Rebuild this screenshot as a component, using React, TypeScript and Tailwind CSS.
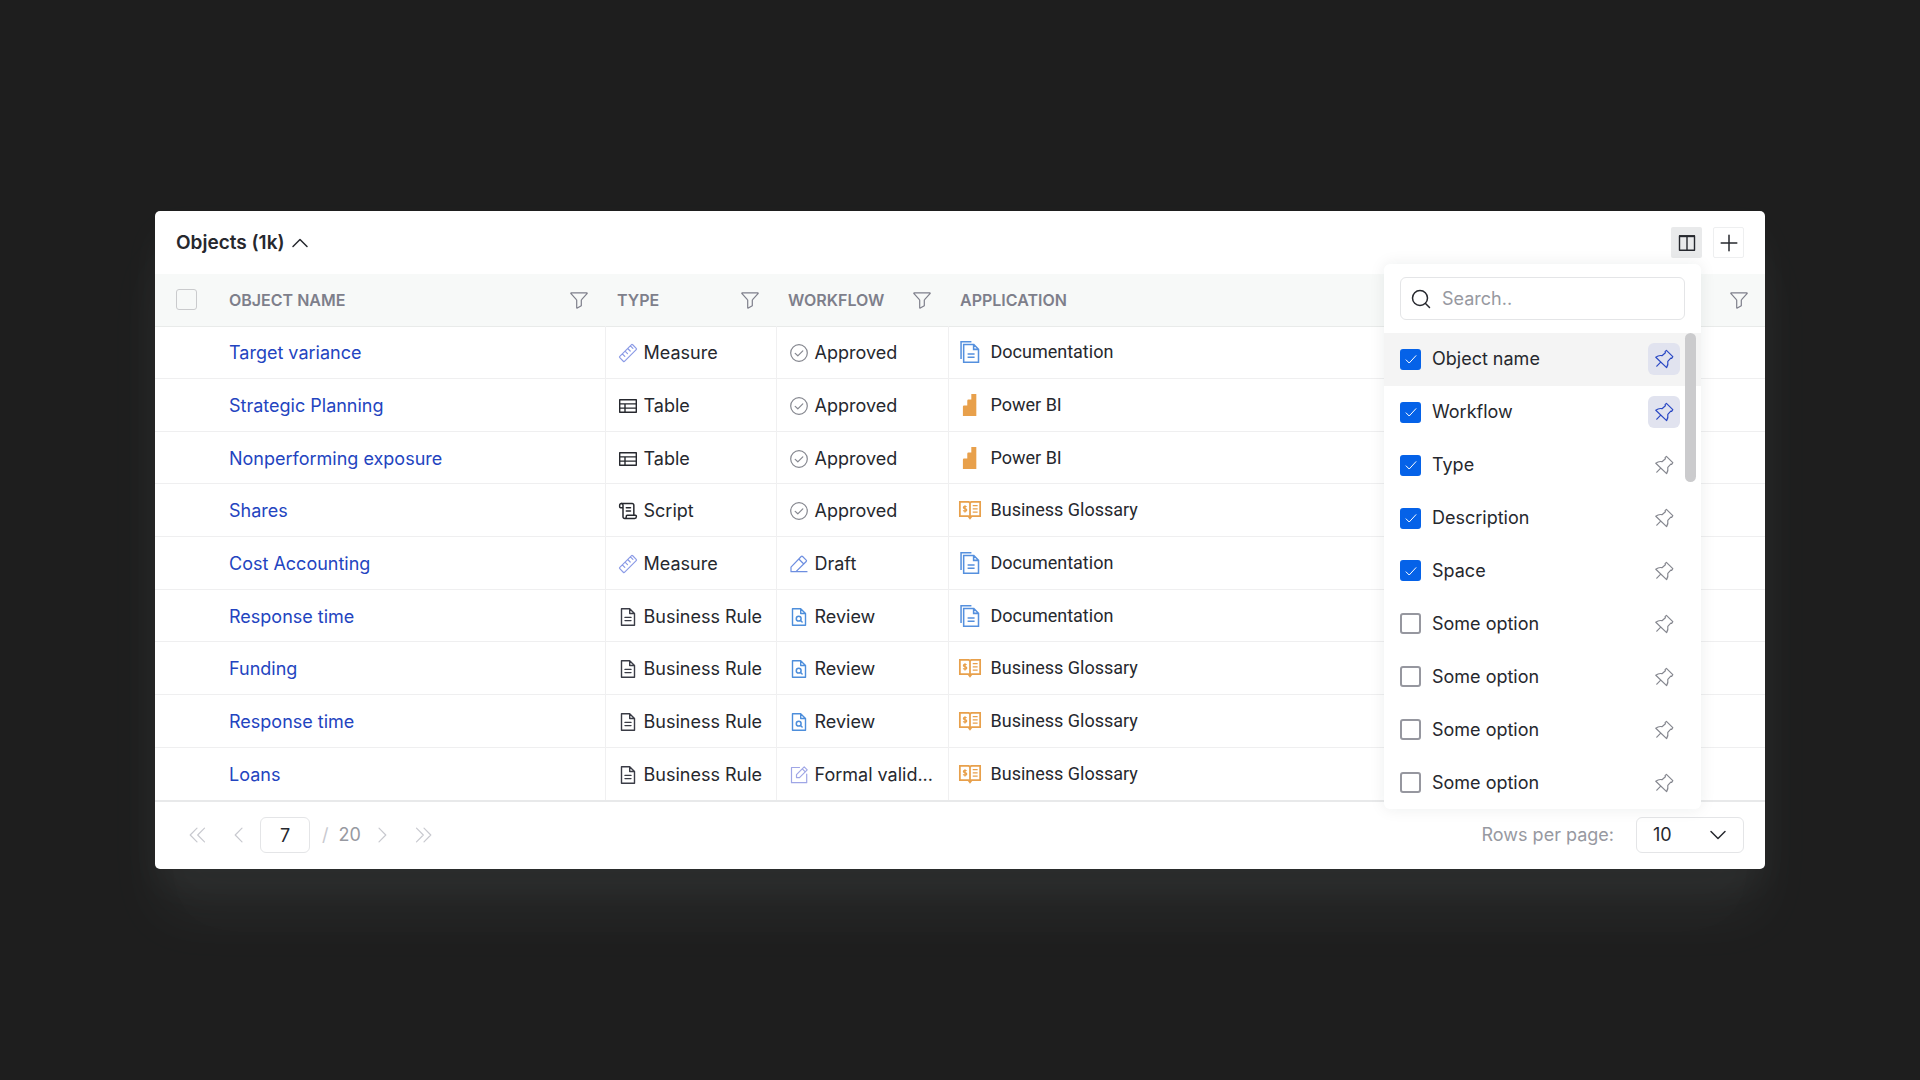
import { useState, type ReactNode } from 'react';
import { ScrollText } from 'lucide-react';

interface IconProps {
  className?: string;
  children?: ReactNode;
}

function Icon({ className = '', children }: IconProps) {
  return (
    <svg
      viewBox="0 0 20 20"
      fill="none"
      stroke="currentColor"
      strokeWidth="1.2"
      strokeLinejoin="round"
      strokeLinecap="round"
      aria-hidden="true"
      className={`size-5 shrink-0 ${className}`}
    >
      {children}
    </svg>
  );
}

const FilterIcon = () => (
  <Icon>
    <path d="M2.4 2.8h15.2a.5.5 0 0 1 .4.9l-5.4 5.9a1 1 0 0 0-.3.7v5.5l-4 2.3a.4.4 0 0 1-.6-.3v-7.5a1 1 0 0 0-.3-.7L2 3.7a.5.5 0 0 1 .4-.9z" />
  </Icon>
);

const PinIcon = () => (
  <Icon>
    <path d="M12.4 1.4 18.8 7.6l-1 1.7-1-.2-3 3.3c.4 2.3.1 4.1-1.2 6.2L1.8 8.2c2-1.5 4-2 6.2-1.5l3.4-2.9-.3-1.2z M6.7 13.2 2.8 17.2" />
  </Icon>
);

const typeIcons: Record<string, ReactNode> = {
  Measure: (
    <Icon className="text-[#8b9be6]">
      <path d="M1.8 13.3 13.3 1.8a1 1 0 0 1 1.4 0l3.5 3.5a1 1 0 0 1 0 1.4L6.7 18.2a1 1 0 0 1-1.4 0l-3.5-3.5a1 1 0 0 1 0-1.4z M4.3 10.9l2.5 2.5 M7 8.2l2.5 2.5 M9.7 5.5l2.5 2.5 M12.4 2.9l2.5 2.5" />
    </Icon>
  ),
  Table: (
    <Icon className="text-[#26282e]">
      <path strokeWidth="1.4" d="M1.7 3.7h16.6v12.6H1.7z M1.7 7.9h16.6 M1.7 12.1h16.6 M7 7.9v8.4" />
    </Icon>
  ),
  Script: <ScrollText className="size-5 shrink-0 text-[#26282e]" strokeWidth={1.8} aria-hidden="true" />,
  'Business Rule': (
    <Icon className="text-[#3a3c46]">
      <path strokeWidth="1.4" d="M3.5 1.7h8.2l4.8 4.8v11.8h-13z M11.7 1.7v4.8h4.8 M7 10.4h6 M7 13.6h6" />
    </Icon>
  ),
};

const workflowIcons: Record<string, ReactNode> = {
  Approved: (
    <Icon className="text-[#85878f]">
      <circle cx="10" cy="10" r="8.3" />
      <path d="M6.2 10.4 8.8 12.8 13.8 7.8" />
    </Icon>
  ),
  Draft: (
    <Icon className="text-[#6d8ee0]">
      <path d="M2 17.7v-4.6L12.2 2.5a1 1 0 0 1 1.4 0l3.6 3.6a1 1 0 0 1 0 1.4L7 17.7z M2 17.7h16 M9.8 5l5 5" />
    </Icon>
  ),
  Review: (
    <Icon className="text-[#4d8edb]">
      <path strokeWidth="1.4" d="M3.5 1.7h8.2l4.8 4.8v11.8h-13z M11.7 1.7v4.8h4.8" />
      <circle cx="9.7" cy="11.7" r="2.4" strokeWidth="1.5" />
      <path strokeWidth="1.5" d="m11.5 13.5 1.6 1.5" />
    </Icon>
  ),
  'Formal valid...': (
    <Icon className="text-[#9fa6e6]">
      <path d="M10.5 2.5h-8v15.2h15.2V9 M7.5 12.6v-3L15.2 1.9l3 3-7.7 7.7z M13.3 3.8l3 3" />
    </Icon>
  ),
};

const applicationIcons: Record<string, ReactNode> = {
  Documentation: (
    <svg viewBox="0 0 22 22" fill="none" stroke="currentColor" strokeWidth="1.4" aria-hidden="true" className="size-6 shrink-0 text-[#5590de]">
      <path d="M2.8 17.5V1.7h9.5 M5.2 4.2h9.3l4.3 4.3v11.8H5.2z M14.3 4.2v4.4h4.5 M8.8 12.8h6.4 M8.8 15.8h6.4" />
    </svg>
  ),
  'Power BI': (
    <svg viewBox="0 0 22 22" fill="currentColor" aria-hidden="true" className="size-6 shrink-0 text-[#e8a04b]">
      <path d="M12.2 1h4.6v20H4.500V12.5a1 1 0 0 1 1-1h3V7a1 1 0 0 1 1-1h2.7z" />
    </svg>
  ),
  'Business Glossary': (
    <svg viewBox="0 0 22 22" fill="none" stroke="currentColor" strokeWidth="1.6" aria-hidden="true" className="size-6 shrink-0 text-[#e8a04b]">
      <path d="M11 4.800 10 3.600H1.700v13h7.800l1.500 2 1.500-2h7.800v-13H12z M11 4.800v13.500" />
      <path strokeWidth="1.2" d="M13.500 7h4.500 M13.500 10h4.500 M13.500 13h4.500 M7.800 8.200c-.6-.9-2.800-.8-2.800.4 0 1.500 3 .9 3 2.500 0 1.300-2.500 1.400-3.200.3 M6.400 6.600v6.800" />
    </svg>
  ),
};

const rows = [
  { name: 'Target variance', type: 'Measure', workflow: 'Approved', application: 'Documentation' },
  { name: 'Strategic Planning', type: 'Table', workflow: 'Approved', application: 'Power BI' },
  { name: 'Nonperforming exposure', type: 'Table', workflow: 'Approved', application: 'Power BI' },
  { name: 'Shares', type: 'Script', workflow: 'Approved', application: 'Business Glossary' },
  { name: 'Cost Accounting', type: 'Measure', workflow: 'Draft', application: 'Documentation' },
  { name: 'Response time', type: 'Business Rule', workflow: 'Review', application: 'Documentation' },
  { name: 'Funding', type: 'Business Rule', workflow: 'Review', application: 'Business Glossary' },
  { name: 'Response time', type: 'Business Rule', workflow: 'Review', application: 'Business Glossary' },
  { name: 'Loans', type: 'Business Rule', workflow: 'Formal valid...', application: 'Business Glossary' },
];

const initialColumns = [
  { label: 'Object name', visible: true, pinned: true },
  { label: 'Workflow', visible: true, pinned: true },
  { label: 'Type', visible: true, pinned: false },
  { label: 'Description', visible: true, pinned: false },
  { label: 'Space', visible: true, pinned: false },
  { label: 'Some option', visible: false, pinned: false },
  { label: 'Some option', visible: false, pinned: false },
  { label: 'Some option', visible: false, pinned: false },
  { label: 'Some option', visible: false, pinned: false },
];

function ColumnPicker() {
  const [columns, setColumns] = useState(initialColumns);

  const toggle = (index: number, key: 'visible' | 'pinned') => {
    setColumns(columns.map((c, i) => (i === index ? { ...c, [key]: !c[key] } : c)));
  };

  return (
    <div className="absolute right-px top-full z-10 mt-1.5 w-[317px] rounded-md bg-white shadow-[0_0_16px_rgba(30,40,40,0.08)]">
      <div className="px-4 py-[13px]">
        <label className="flex h-[43px] items-center gap-[11px] rounded-md border border-[#e4e5e7] px-2.5 text-[#26282e]">
          <Icon>
            <circle cx="9" cy="9" r="7.5" strokeWidth="1.5" />
            <path strokeWidth="1.5" d="m14.5 14.5 4 4" />
          </Icon>
          <input
            type="text"
            aria-label="Search"
            placeholder="Search.."
            className="w-full min-w-0 bg-transparent outline-none placeholder:text-[#9799a1]"
          />
        </label>
      </div>
      <div className="relative">
        <ul className="grid h-[476px] auto-rows-fr">
          {columns.map((column, i) => (
            <li key={i} className={`flex items-center justify-between pl-4 pr-[21px] ${i === 0 ? 'bg-[#f4f4f4]' : ''}`}>
              <label className="flex items-center gap-[11px]">
                <span className="grid size-[21px] place-items-center *:col-start-1 *:row-start-1">
                  <input
                    type="checkbox"
                    checked={column.visible}
                    onChange={() => toggle(i, 'visible')}
                    className="size-[21px] appearance-none rounded-[3px] border-2 border-[#96979f] checked:border-[#0562e8] checked:bg-[#0562e8]"
                  />
                  {column.visible && (
                    <svg viewBox="0 0 12 12" fill="none" stroke="white" aria-hidden="true" className="pointer-events-none size-3">
                      <path d="m.8 6.6 3.4 3.4 7-7.6" />
                    </svg>
                  )}
                </span>
                {column.label}
              </label>
              <button
                type="button"
                aria-label={`Pin ${column.label}`}
                onClick={() => toggle(i, 'pinned')}
                className={`grid size-8 place-items-center rounded-md ${column.pinned ? 'bg-[#e1e3ef] text-[#2a48c4]' : 'text-[#85878f]'}`}
              >
                <PinIcon />
              </button>
            </li>
          ))}
        </ul>
        <div className="absolute right-[5px] top-0 h-[149px] w-[11px] rounded-full bg-[#cbcbcd]" />
      </div>
    </div>
  );
}

function HeaderCell({ label }: { label: string }) {
  return (
    <th scope="col" className="pl-3 pr-4 text-left text-base font-semibold text-[#7e7f8b]">
      <div className="flex items-center justify-between">
        {label}
        <button type="button" aria-label={`Filter ${label}`}>
          <FilterIcon />
        </button>
      </div>
    </th>
  );
}

function Pagination() {
  return (
    <footer className="flex h-[67px] items-center justify-between px-[21px] pb-px">
      <div className="flex items-center text-[#c8c9cf]">
        <button type="button" aria-label="First page" className="ml-3">
          <Icon><path d="M9 3.2 2.2 10 9 16.8 M16.5 3.2 9.7 10l6.8 6.8" /></Icon>
        </button>
        <button type="button" aria-label="Previous page" className="ml-5">
          <Icon><path d="M14 3.2 7.2 10l6.8 6.8" /></Icon>
        </button>
        <input
          type="text"
          aria-label="Page"
          defaultValue="7"
          className="ml-3 h-9 w-[50px] rounded-md border border-[#e4e5e7] text-center text-[#26282e]"
        />
        <span className="ml-3">/</span>
        <span className="ml-2.5 text-[#9799a1]">20</span>
        <button type="button" aria-label="Next page" className="ml-3">
          <Icon><path d="m6 3.2 6.8 6.8L6 16.8" /></Icon>
        </button>
        <button type="button" aria-label="Last page" className="ml-5">
          <Icon><path d="m3.5 3.2 6.8 6.8-6.8 6.8 M11 3.2l6.8 6.8-6.8 6.8" /></Icon>
        </button>
      </div>
      <div className="flex items-center gap-[22px]">
        <label htmlFor="rows-per-page" className="text-[#9799a1]">Rows per page:</label>
        <div className="relative">
          <select
            id="rows-per-page"
            defaultValue="10"
            className="h-9 w-[108px] appearance-none rounded-md border border-[#e4e5e7] bg-white px-4 text-[#26282e]"
          >
            <option>10</option>
            <option>20</option>
            <option>50</option>
          </select>
          <span className="pointer-events-none absolute inset-y-0 right-4 flex items-center text-[#26282e]">
            <Icon><path strokeWidth="1.5" d="m3 6.5 7 7 7-7" /></Icon>
          </span>
        </div>
      </div>
    </footer>
  );
}

export default function App() {
  const [open, setOpen] = useState(true);

  return (
    <div className="flex min-h-screen items-center bg-[#1e1e1e] px-[155px] font-['Inter',sans-serif] text-lg leading-6 text-[#26282e]">
      <section className="w-full rounded-[5px] bg-white shadow-[0_20px_40px_rgba(225,255,245,0.04),0_50px_60px_rgba(225,255,245,0.04),0_80px_80px_rgba(225,255,245,0.01)]">
        <header className="flex h-[63px] items-center justify-between px-[21px]">
          <button type="button" className="flex items-center gap-[5px] text-[19px] font-semibold">
            Objects (1k)
            <Icon><path strokeWidth="1.5" d="m3 13.5 7-7 7 7" /></Icon>
          </button>
          <div className="flex items-center gap-[11px]">
            <div className="relative">
              <button
                type="button"
                aria-label="Columns"
                aria-expanded={open}
                onClick={() => setOpen(!open)}
                className="grid size-[31px] place-items-center rounded-xs bg-[#e9eaeb]"
              >
                <Icon>
                  <path strokeWidth="1.4" d="M2.5 3h15v14.3h-15z M10 3v14" />
                  <path strokeWidth="2" strokeLinecap="butt" d="M2 3.2h16" />
                </Icon>
              </button>
              {open && <ColumnPicker />}
            </div>
            <button type="button" aria-label="Add object" className="grid size-[31px] place-items-center rounded-xs border border-[#eeeff0]">
              <Icon><path strokeWidth="1.5" d="M10 2.2v15.6 M2.2 10h15.6" /></Icon>
            </button>
          </div>
        </header>

        <table className="h-[528px] w-full table-fixed border-collapse">
          <colgroup>
            <col className="w-[62px]" />
            <col className="w-[388px]" />
            <col className="w-[171px]" />
            <col className="w-[172px]" />
            <col />
          </colgroup>
          <thead className="bg-[#f7f9f8]">
            <tr className="h-[52px] border-b border-[#e9ebea]">
              <th scope="col" className="pl-[21px]">
                <input
                  type="checkbox"
                  aria-label="Select all objects"
                  className="block size-[21px] appearance-none rounded-[3px] border border-[#cacbcd]"
                />
              </th>
              <HeaderCell label="OBJECT NAME" />
              <HeaderCell label="TYPE" />
              <HeaderCell label="WORKFLOW" />
              <HeaderCell label="APPLICATION" />
            </tr>
          </thead>
          <tbody>
            {rows.map((row, i) => (
              <tr key={i} className="border-b border-[#efeff0] last:border-b-2 last:border-[#e8e9ea]">
                <td />
                <td className="px-3 pt-0.5">
                  <a href="#" className="text-[#2344c0]">{row.name}</a>
                </td>
                <td className="border-l border-[#f0f0f1] pl-3 pt-0.5">
                  <div className="flex items-center gap-1.5 whitespace-nowrap">
                    {typeIcons[row.type]}
                    {row.type}
                  </div>
                </td>
                <td className="border-l border-[#f0f0f1] pl-3 pt-0.5">
                  <div className="flex items-center gap-1.5 whitespace-nowrap">
                    {workflowIcons[row.workflow]}
                    {row.workflow}
                  </div>
                </td>
                <td className="border-l border-[#f0f0f1] pl-[9px] font-['Roboto',sans-serif]">
                  <div className="flex items-center gap-[9px]">
                    {applicationIcons[row.application]}
                    {row.application}
                  </div>
                </td>
              </tr>
            ))}
          </tbody>
        </table>

        <Pagination />
      </section>
    </div>
  );
}
